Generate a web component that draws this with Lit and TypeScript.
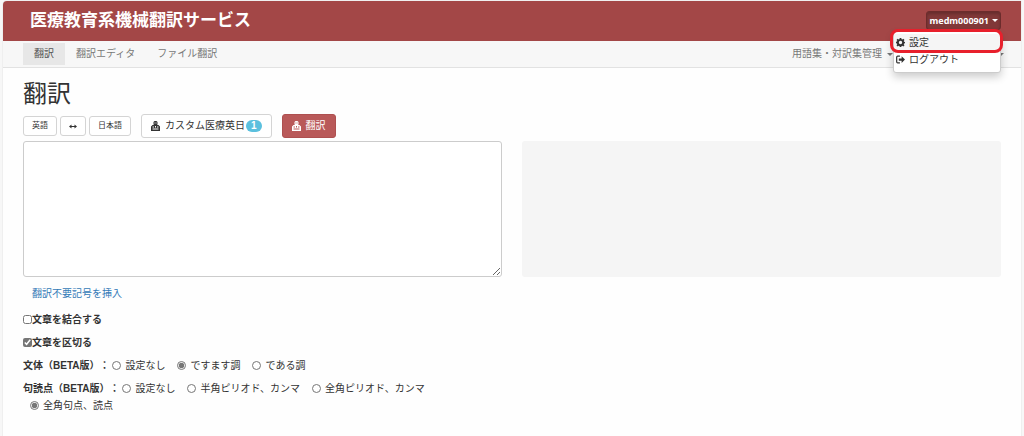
import { LitElement, html, css } from "lit";
import { customElement } from "lit/decorators.js";

const robot = html`<svg class="robot" viewBox="0 0 18 20" aria-hidden="true">
  <path fill="currentColor" fill-rule="evenodd" d="M7 0h4l2 2v5l-1 1h3l3 3v9H0v-9l3-3h3L5 7V2zM7 3v2h1.500V3zm2.500 0v2H11V3zM3 11v2h3v-2zm5-1v3h2v-3zm4 1v2h3v-2zM3 15v2h12v-2z"/>
</svg>`;

const gear = html`<svg class="icon" viewBox="0 0 16 16" aria-hidden="true">
  <path fill="currentColor" fill-rule="evenodd" d="M6.6 0h2.8l.5 2.2 1.3.6 1.9-1.3 2 2-1.3 1.9.6 1.3 1.6.4v2.3l-1.7.5-.5 1.3 1.3 1.9-2 2-1.9-1.3-1.3.6L9.4 16H6.6l-.5-1.9-1.3-.5-1.9 1.3-2-2 1.3-1.9-.5-1.3L0 9.4V6.8l1.7-.4.6-1.3L.9 3.400l2-2 1.900 1.300 1.300-.5zM8 5a3 3 0 1 0 0 6 3 3 0 0 0 0-6z"/>
</svg>`;

const signOut = html`<svg class="icon" viewBox="0 0 16 16" aria-hidden="true">
  <path fill="none" stroke="currentColor" stroke-width="2.200" d="M7 2H3Q1.200 2 1.200 4v8q0 2 1.800 2h4"/>
  <path fill="currentColor" d="M5 6h5V2l6 6-6 6v-4H5z"/>
</svg>`;

const swap = html`<svg class="swap" viewBox="0 0 16 10" aria-hidden="true">
  <path fill="currentColor" d="M0 5l5-4v3h6V1l5 4-5 4V6H5v3z"/>
</svg>`;

@customElement("app-root")
export class AppRoot extends LitElement {
  static styles = css`
    :host {
      display: block;
      min-height: 100vh;
      box-sizing: border-box;
      padding: 1px 3px 0 3px;
      background: #f7f7f7;
      color: #333;
      font: 10px/16px "Liberation Sans", "Noto Sans CJK JP", sans-serif;
      text-spacing-trim: space-all;
    }
    * { box-sizing: border-box; }
    button, textarea { font: inherit; color: inherit; margin: 0; }
    button { cursor: pointer; }
    .page { min-height: calc(100vh - 1px); background: #fefefe; border-radius: 4px 0 0 0; box-shadow: 0 0 1px #aaa; }
    .top {
      display: flex;
      align-items: center;
      justify-content: space-between;
      height: 40px;
      padding: 0 20px 4px 27px;
      background: #a34747;
      border-radius: 4px 0 0 0;
    }
    .brand { color: #fff; font-size: 17px; line-height: 24px; font-weight: 700; text-decoration: none; font-family: "Noto Sans CJK JP", sans-serif; }
    .account { position: relative; padding-top: 3px; }
    .user {
      display: flex;
      align-items: center;
      gap: 3px;
      height: 19px;
      padding: 0 2px 0 3px;
      border: 1px solid #6c2c2c;
      border-radius: 3px;
      background: #813838;
      color: #fff;
      font-family: "Noto Sans", sans-serif;
      font-size: 9px;
      font-weight: 700;
      box-shadow: inset 0 2px 3px #0003;
    }
    .caret { border: 3px solid transparent; border-top-color: currentColor; border-bottom: 0; }
    .menu {
      position: absolute;
      z-index: 2;
      top: 23px;
      right: 0;
      width: 108px;
      margin: 0;
      padding: 2px 0 4px;
      list-style: none;
      background: #fff;
      border: 1px solid #ccc;
      border-radius: 3px;
      box-shadow: 0 4px 8px #0003;
    }
    .menu a { display: flex; align-items: center; gap: 4px; height: 17px; padding: 0 2px; color: #333; text-decoration: none; }
    .menu .current { background: #f5f5f5; }
    .callout {
      position: absolute;
      top: -3px;
      left: -4px;
      right: -3px;
      height: 24px;
      border: 3px solid #e8202c;
      border-radius: 8px;
      pointer-events: none;
    }
    .icon { width: 9px; height: 9px; }
    .nav {
      display: flex;
      align-items: center;
      justify-content: space-between;
      height: 27px;
      padding: 0 17px 0 20px;
      background: #f7f7f7;
      border-bottom: 1px solid #e2e2e2;
    }
    .links { display: flex; }
    .links a { display: flex; align-items: center; gap: 5px; height: 22px; padding: 0 11px; color: #777; text-decoration: none; }
    .links .active { background: #e7e7e7; color: #555; }
    .links .last { padding: 0 0 0 94px; }
    main { padding: 10px 20px; }
    h1 { margin: 0; font-size: 24px; line-height: 28px; font-weight: 400; font-family: "Noto Sans CJK JP", sans-serif; }
    .tools { display: flex; align-items: center; gap: 3px; margin-top: 8px; }
    .btn {
      display: flex;
      align-items: center;
      gap: 5px;
      height: 24px;
      padding: 0 8px;
      border: 1px solid #d4d4d4;
      border-radius: 3px;
      background: #fff;
    }
    .small { height: 20px; font-size: 8px; }
    .engine { margin: 0 7px; }
    .primary { background: #b95959; border-color: #ae5050; color: #fff; }
    .badge { margin-left: -4px; padding: 0 5px; border-radius: 6px; background: #5bc0de; color: #fff; line-height: 12px; font-weight: 700; }
    .robot { width: 9px; height: 10px; }
    .swap { width: 8px; height: 5px; }
    .cols { display: grid; grid-template-columns: 1fr 1fr; gap: 20px; margin-top: 3px; }
    .engine, .primary { padding: 0 9px; }
    textarea { display: block; width: 100%; height: 136px; padding: 6px; border: 1px solid #ccc; border-radius: 3px; background: #fff; resize: both; }
    .result { background: #f5f5f5; border-radius: 3px; }
    .options { display: flex; flex-direction: column; align-items: flex-start; width: calc(50% - 10px); gap: 7px; margin-top: 9px; }
    .insert { margin: 0 0 3px 9px; color: #337ab7; text-decoration: none; }
    input { width: 9px; height: 9px; margin: 0 0 2px; flex: none; accent-color: #767676; }
    .check, .choice { display: flex; align-items: center; line-height: 16px; }
    .check, .name { font-weight: 700; }
    .group { display: flex; flex-wrap: wrap; gap: 1px 6px; line-height: 16px; }
    .name { margin-right: -3px; }
    .choice { gap: 4px; padding-right: 6px; }
    .wrapped { padding-left: 7px; }
  `;

  private choice(name: string, text: string, checked = false, extra = "") {
    return html`<label class="choice ${extra}"><input type="radio" name=${name} ?checked=${checked} />${text}</label>`;
  }

  render() {
    return html`
      <div class="page">
        <header class="top">
          <a class="brand" href="#">医療教育系機械翻訳サービス</a>
          <div class="account">
            <button class="user" aria-expanded="true">medm000901<span class="caret"></span></button>
            <ul class="menu">
              <li><a class="current" href="#">${gear}設定</a></li>
              <li><a href="#">${signOut}ログアウト</a></li>
              <li class="callout" role="presentation"></li>
            </ul>
          </div>
        </header>
        <nav class="nav">
          <div class="links">
            <a class="active" href="#">翻訳</a>
            <a href="#">翻訳エディタ</a>
            <a href="#">ファイル翻訳</a>
          </div>
          <div class="links">
            <a href="#">用語集・対訳集管理<span class="caret"></span></a>
            <a class="last" href="#"><span class="caret"></span></a>
          </div>
        </nav>
        <main>
          <h1 id="source">翻訳</h1>
          <div class="tools">
            <button class="btn small">英語</button>
            <button class="btn small">${swap}</button>
            <button class="btn small">日本語</button>
            <button class="btn engine">${robot}カスタム医療英日<span class="badge">1</span></button>
            <button class="btn primary">${robot}翻訳</button>
          </div>
          <div class="cols">
            <textarea aria-labelledby="source"></textarea>
            <div class="result"></div>
          </div>
          <div class="options">
            <a class="insert" href="#">翻訳不要記号を挿入</a>
            <label class="check"><input type="checkbox" />文章を結合する</label>
            <label class="check"><input type="checkbox" checked />文章を区切る</label>
            <div class="group" role="radiogroup" aria-labelledby="style">
              <span class="name" id="style">文体（BETA版）：</span>
              ${this.choice("style", "設定なし")}
              ${this.choice("style", "ですます調", true)}
              ${this.choice("style", "である調")}
            </div>
            <div class="group" role="radiogroup" aria-labelledby="punctuation">
              <span class="name" id="punctuation">句読点（BETA版）：</span>
              ${this.choice("punctuation", "設定なし")}
              ${this.choice("punctuation", "半角ピリオド、カンマ")}
              ${this.choice("punctuation", "全角ピリオド、カンマ")}
              ${this.choice("punctuation", "全角句点、読点", true, "wrapped")}
            </div>
          </div>
        </main>
      </div>
    `;
  }
}
